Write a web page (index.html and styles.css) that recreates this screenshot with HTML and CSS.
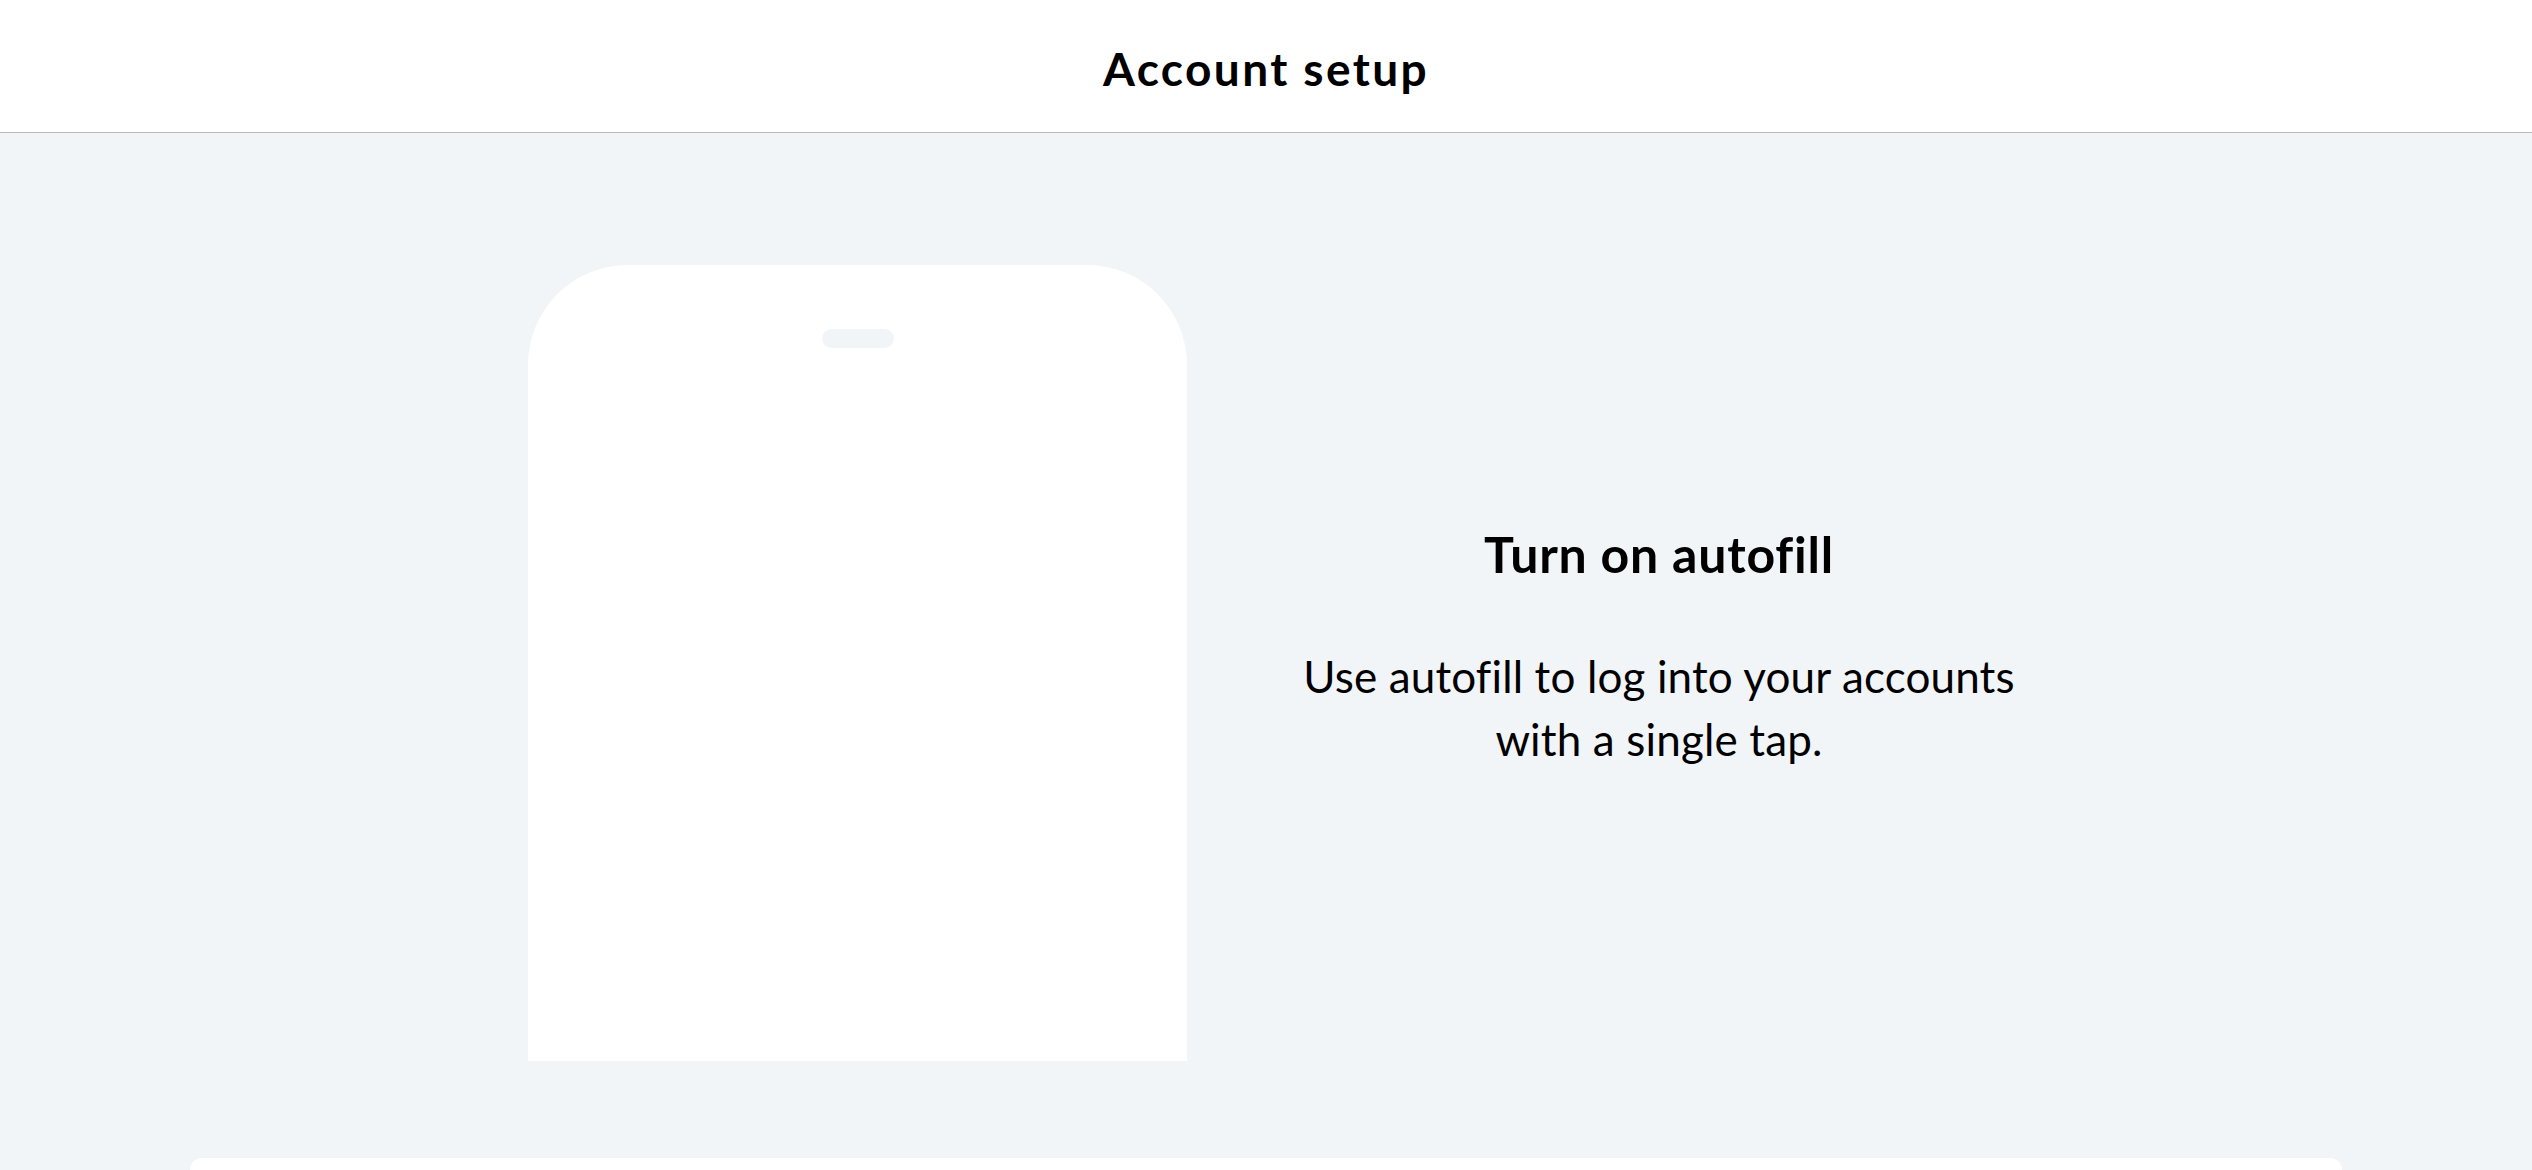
FILE: index.html
```html
<!DOCTYPE html>
<html lang="en">
<head>
<meta charset="utf-8">
<title>Account setup</title>
<link rel="stylesheet" href="styles.css">
</head>
<body>
<div class="app">
  <header class="topbar">
    <h1 class="topbar-title">Account setup</h1>
  </header>
  <main class="content">
    <section class="hero">
      <div class="phone">
        <div class="phone-speaker"></div>
      </div>
      <div class="copy">
        <h2 class="copy-title">Turn on autofill</h2>
        <p class="copy-text">Use autofill to log into your accounts<br>with a single tap.</p>
      </div>
    </section>
    <div class="sheet"></div>
  </main>
</div>
</body>
</html>
```
FILE: styles.css
```css
* { box-sizing: border-box; }
html, body {
  margin: 0;
  padding: 0;
  height: 100%;
  overflow: hidden;
}
body {
  font-family: "Lato", "Inter", sans-serif;
  color: #000;
  background: #f2f5f8;
}
.app {
  display: flex;
  flex-direction: column;
  height: 1170px;
  overflow: hidden;
}
.topbar {
  height: 133px;
  flex: none;
  background: #fff;
  border-bottom: 1px solid #b9b9be;
  display: flex;
  align-items: center;
  justify-content: center;
}
.topbar-title {
  margin: 0;
  font-size: 46px;
  font-weight: 700;
  line-height: 1;
  letter-spacing: 2.4px;
  padding-top: 5px;
}
.content {
  flex: 1;
  min-height: 0;
  display: flex;
  flex-direction: column;
  padding-top: 132px;
}
.hero {
  flex: none;
  display: flex;
  align-items: center;
  padding-left: 528px;
  gap: 72px;
}
.phone {
  width: 659px;
  height: 796px;
  flex: none;
  background: #fff;
  border-radius: 100px 100px 0 0;
  display: flex;
  justify-content: center;
  padding-top: 64px;
}
.phone-speaker {
  width: 72px;
  height: 19px;
  border-radius: 10px;
  background: #f2f5f8;
}
.copy {
  width: 800px;
  text-align: center;
  padding-bottom: 32px;
}
.copy-title {
  margin: 0;
  font-size: 50px;
  font-weight: 700;
  line-height: 60px;
  letter-spacing: 0.8px;
}
.copy-text {
  margin: 61px 0 0;
  font-size: 44px;
  font-weight: 400;
  line-height: 63px;
  letter-spacing: 0.15px;
}
.sheet {
  flex: 1;
  margin: 97px 190px 0;
  background: #fff;
  border-radius: 40px 40px 0 0;
}
```
